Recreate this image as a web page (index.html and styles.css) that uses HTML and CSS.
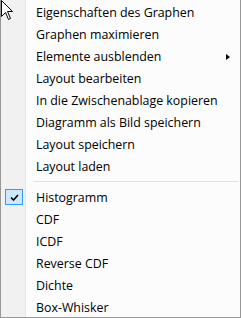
FILE: index.html
```html
<!DOCTYPE html>
<html lang="de">
<head>
    <meta charset="UTF-8">
    <title>Kontextmenü</title>
    <link rel="stylesheet" href="styles.css">
</head>
<body>
    <div class="menu">
        <ul class="items">
            <li>Eigenschaften des Graphen</li>
            <li>Graphen maximieren</li>
            <li class="sub">Elemente ausblenden <span class="arrow"></span></li>
            <li>Layout bearbeiten</li>
            <li>In die Zwischenablage kopieren</li>
            <li>Diagramm als Bild speichern</li>
            <li>Layout speichern</li>
            <li>Layout laden</li>
        </ul>
        <div class="sep"></div>
        <ul class="items">
            <li class="checked">
                <span class="check">
                    <svg width="9" height="7" viewBox="0 0 9 7"><path d="M1 3.5 L3.5 6 L8 1" fill="none" stroke="#000" stroke-width="1.6"/></svg>
                </span>
                Histogramm
            </li>
            <li>CDF</li>
            <li>ICDF</li>
            <li>Reverse CDF</li>
            <li>Dichte</li>
            <li>Box-Whisker</li>
        </ul>
        <svg class="cursor" width="13" height="21" viewBox="0 0 13 21">
            <path d="M0.5 0.5 L0.5 16.5 L4.5 12.5 L7.5 19.5 L9.5 18.5 L6.5 11.5 L11.5 11.5 Z" fill="#fff" stroke="#000" stroke-width="1"/>
        </svg>
    </div>
</body>
</html>
```

FILE: styles.css
```css
body {
    margin: 0;
    padding: 0;
    background: #fff;
}

.menu {
    position: relative;
    width: 239px;
    height: 315px;
    border: 1px solid #979797;
    border-top: none;
    padding-top: 2px;
    box-sizing: content-box;
    background: linear-gradient(to right, #f1f1f1 0, #f1f1f1 24px, #e2e3e3 24px, #e2e3e3 25px, #fff 25px, #fff 26px, #fcfcfc 26px);
    font-family: "Open Sans", "Noto Sans", sans-serif;
    font-size: 12.4px;
    color: #000;
}

.items {
    list-style: none;
    margin: 0;
    padding: 0;
}

.items li {
    position: relative;
    height: 22px;
    line-height: 21px;
    padding-left: 35px;
    white-space: nowrap;
}

.arrow {
    position: absolute;
    left: 225px;
    top: 8px;
    width: 0;
    height: 0;
    border-top: 3.5px solid transparent;
    border-bottom: 3.5px solid transparent;
    border-left: 4px solid #000;
}

.sep {
    height: 1px;
    margin: 3px 2px 4px 33px;
    background: #e0e0e0;
    border-bottom: 1px solid #fff;
}

.check {
    position: absolute;
    left: 4px;
    top: 2px;
    width: 16px;
    height: 14px;
    border: 1px solid #3399ff;
    background: #cce8ff;
    display: flex;
    align-items: center;
    justify-content: center;
}

.cursor {
    position: absolute;
    left: 0;
    top: 0;
}
```
